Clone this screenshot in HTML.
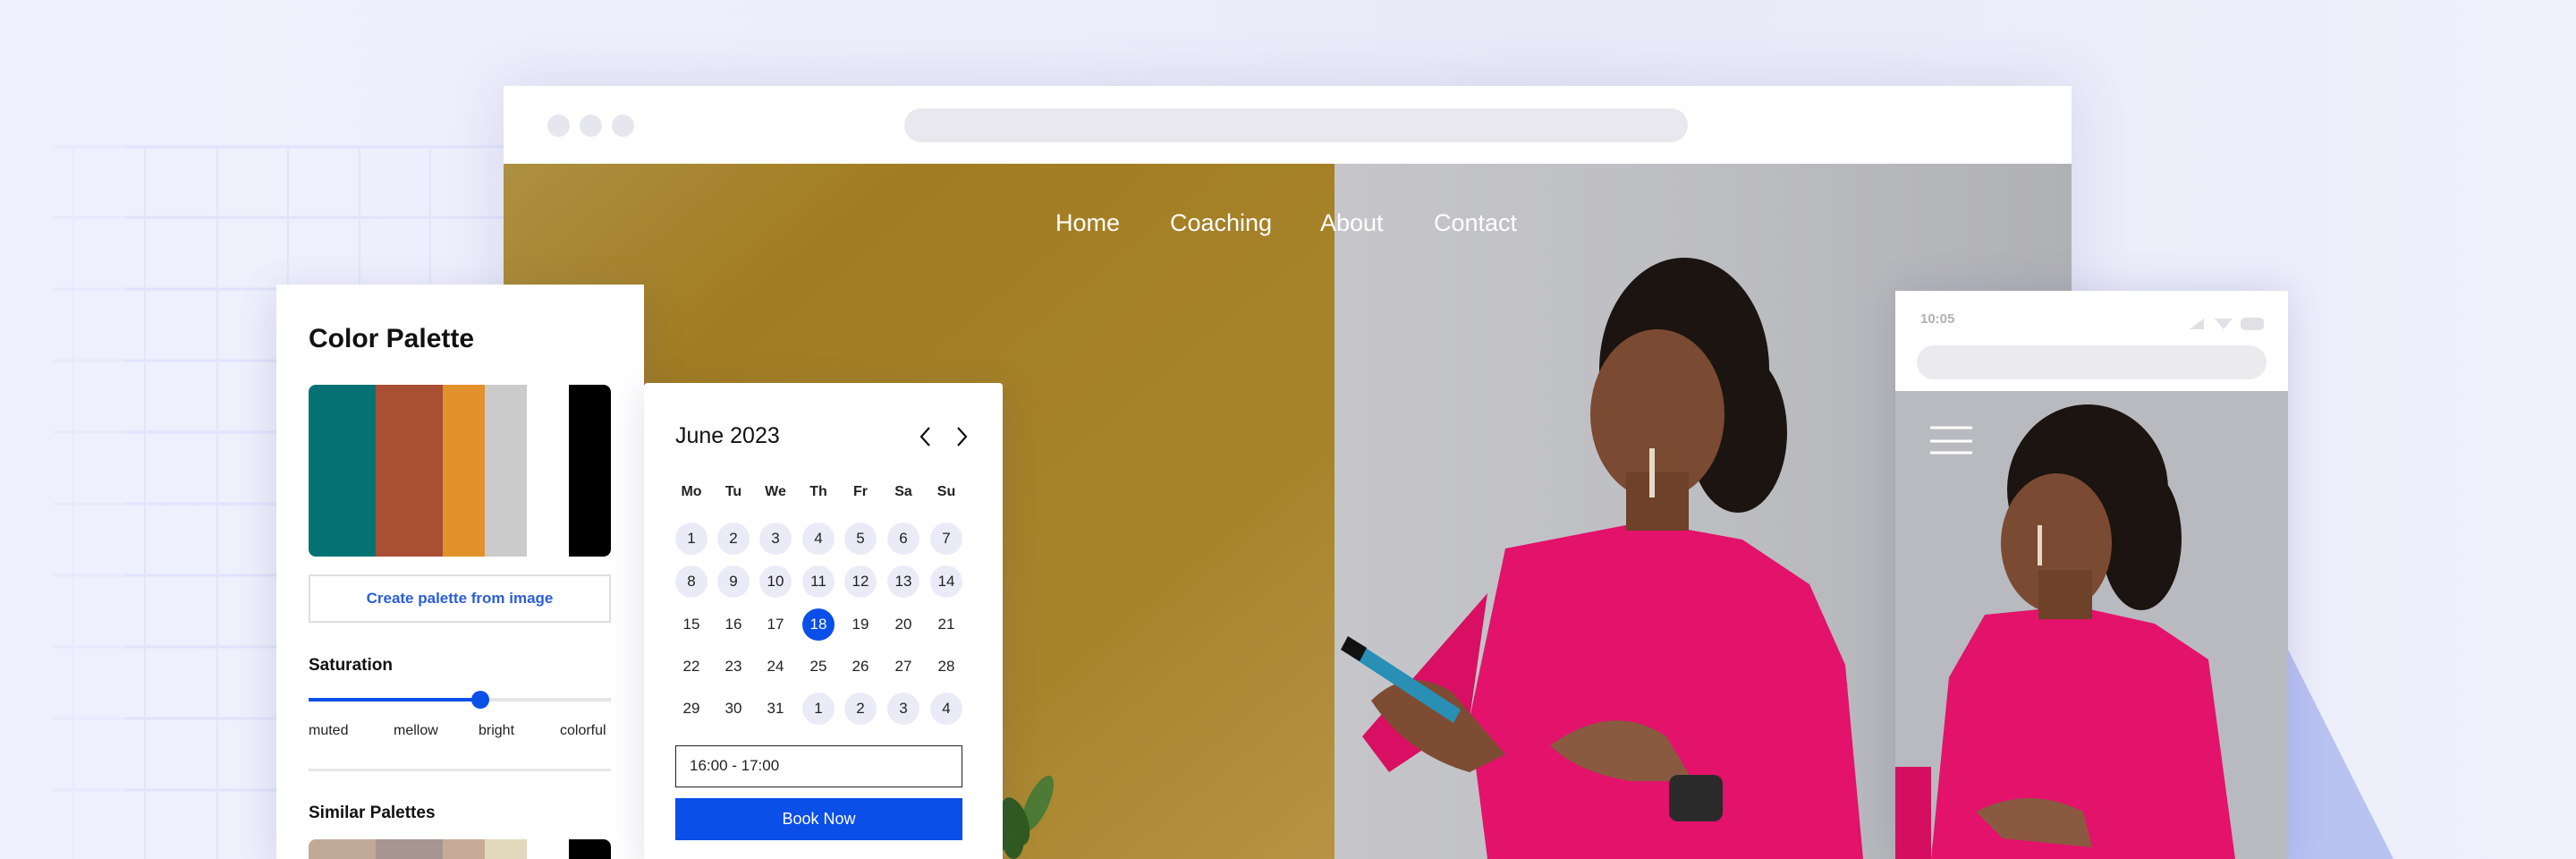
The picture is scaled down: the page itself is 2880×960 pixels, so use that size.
<!DOCTYPE html>
<html><head><meta charset="utf-8"><style>
*{margin:0;padding:0;box-sizing:border-box}
html,body{width:2880px;height:960px;overflow:hidden}
body{position:relative;font-family:"Liberation Sans",sans-serif;background:linear-gradient(90deg,#eef0fd 0%,#eceefb 40%,#e9eaf8 60%,#eef0fc 100%)}
.abs{position:absolute}
.card{position:absolute;background:#fff;box-shadow:0 10px 40px rgba(80,80,140,.18);overflow:hidden}
.dot{position:absolute;width:25px;height:25px;border-radius:50%;background:#e6e7ee;top:128px}
.nav{position:absolute;top:234px;color:#fff;font-size:27px}
.wd{position:absolute;top:541px;font-size:16px;font-weight:bold;color:#222;width:40px;text-align:center;margin-left:-20px}
.d{position:absolute;width:36px;height:36px;margin:-18px 0 0 -18px;border-radius:50%;font-size:17px;color:#222;text-align:center;line-height:36px}
.d.c{background:#ebebf8}
.d.s{background:#0a4fe8;color:#fff}
.lbl{position:absolute;font-size:16px;color:#222}
</style></head><body>
<svg class="abs" style="left:0;top:0" width="600" height="960">
<g stroke="#e0e3fb" stroke-width="3">
<line x1="60" y1="164" x2="570" y2="164"/><line x1="60" y1="243" x2="570" y2="243"/><line x1="60" y1="323" x2="570" y2="323"/><line x1="60" y1="403" x2="570" y2="403"/><line x1="60" y1="483" x2="570" y2="483"/><line x1="60" y1="563" x2="570" y2="563"/><line x1="60" y1="643" x2="570" y2="643"/><line x1="60" y1="723" x2="570" y2="723"/><line x1="60" y1="803" x2="570" y2="803"/><line x1="60" y1="883" x2="570" y2="883"/>
</g>
<g stroke="#e2e5fb" stroke-width="2">
<line x1="82" y1="164" x2="82" y2="960"/><line x1="162" y1="164" x2="162" y2="960"/><line x1="243" y1="164" x2="243" y2="960"/><line x1="322" y1="164" x2="322" y2="960"/><line x1="402" y1="164" x2="402" y2="960"/><line x1="481" y1="164" x2="481" y2="960"/>
</g>
<rect x="0" y="150" width="140" height="810" fill="#eef0fd" opacity=".5"/></svg>
<svg class="abs" style="left:0;top:0" width="2880" height="960"><polygon points="2540,690 2676,960 2540,960" fill="#b9c3f2"/></svg>

<div class="card" style="left:563px;top:96px;width:1753px;height:864px;box-shadow:0 0 60px rgba(80,80,150,.15)"></div>
<div class="dot" style="left:612px"></div><div class="dot" style="left:648px"></div><div class="dot" style="left:684px"></div>
<div class="abs" style="left:1011px;top:121px;width:876px;height:38px;border-radius:19px;background:#e8e8ee"></div>
<svg class="abs" style="left:563px;top:183px" width="1753" height="777">
<defs>
<linearGradient id="gold" x1="0" x2="1" y1="0" y2="1"><stop offset="0" stop-color="#ad9040"/><stop offset=".25" stop-color="#a27c22"/><stop offset=".7" stop-color="#a7842c"/><stop offset="1" stop-color="#b89343"/></linearGradient>
<linearGradient id="grey" x1="0" x2="1"><stop offset="0" stop-color="#c6c6ca"/><stop offset=".5" stop-color="#bdbec2"/><stop offset="1" stop-color="#b0b1b4"/></linearGradient>
</defs>
<rect x="0" y="0" width="929" height="777" fill="url(#gold)"/>
<rect x="929" y="0" width="824" height="777" fill="url(#grey)"/>
<g fill="#2f5a1e"><ellipse cx="597" cy="715" rx="12" ry="34" transform="rotate(25 597 715)" fill="#4d7a35"/><ellipse cx="572" cy="735" rx="14" ry="28" transform="rotate(-20 572 735)"/><ellipse cx="552" cy="750" rx="13" ry="24" transform="rotate(10 552 750)"/><ellipse cx="570" cy="755" rx="12" ry="22"/></g>
<g>
<path d="M1120 430 L1275 400 L1385 420 L1460 470 L1500 560 L1520 777 L1100 777 L1080 620 Z" fill="#e3126b"/>
<path d="M1100 480 L1030 560 L960 640 L990 680 L1080 620 Z" fill="#d80f63"/>
<ellipse cx="1320" cy="230" rx="95" ry="125" fill="#1c1410"/>
<ellipse cx="1380" cy="300" rx="55" ry="90" fill="#1c1410"/>
<ellipse cx="1290" cy="280" rx="75" ry="95" fill="#7a4a32"/>
<rect x="1255" y="345" width="70" height="65" fill="#6e4129"/>
<path d="M1170 650 Q1240 600 1300 640 L1330 690 L1260 690 Q1200 680 1170 650 Z" fill="#8a5a40"/>
<rect x="1303" y="683" width="60" height="52" rx="10" fill="#2a2a2a"/>
<path d="M970 600 Q1010 560 1060 590 L1120 660 L1080 680 Q1010 660 970 600 Z" fill="#7e4c33"/>
<path d="M944 528 L1070 610 L1062 625 L936 543 Z" fill="#2a8fb5"/>
<path d="M944 528 L965 541 L957 556 L936 543 Z" fill="#111"/>
<rect x="1281" y="318" width="6" height="55" fill="#e6d8c8"/>
</g>
</svg>
<div class="nav" style="left:1180px">Home</div>
<div class="nav" style="left:1308px">Coaching</div>
<div class="nav" style="left:1476px">About</div>
<div class="nav" style="left:1603px">Contact</div>

<div class="card" style="left:2119px;top:325px;width:439px;height:635px;box-shadow:0 0 40px rgba(80,80,150,.2)"></div>
<div class="abs" style="left:2147px;top:348px;font-size:15px;font-weight:bold;color:#b0b0b6">10:05</div>
<svg class="abs" style="left:2440px;top:350px" width="100" height="24"><polygon points="8,18 24,6 24,18" fill="#e0e0e6"/><polygon points="36,6 56,6 46,18" fill="#e0e0e6"/><rect x="65" y="5" width="26" height="14" rx="5" fill="#e0e0e6"/></svg>
<div class="abs" style="left:2143px;top:386px;width:391px;height:38px;border-radius:19px;background:#ebebef"></div>
<svg class="abs" style="left:2119px;top:437px" width="439" height="523">
<rect width="439" height="523" fill="#b9babf"/>
<path d="M100 250 L200 240 L290 260 L350 300 L380 523 L40 523 L60 320 Z" fill="#e3126b"/>
<rect x="0" y="420" width="40" height="103" fill="#d40f60"/>
<ellipse cx="215" cy="110" rx="90" ry="95" fill="#1c1410"/>
<ellipse cx="275" cy="165" rx="45" ry="80" fill="#1c1410"/>
<ellipse cx="180" cy="170" rx="62" ry="78" fill="#7a4a32"/>
<rect x="160" y="200" width="60" height="55" fill="#6e4129"/>
<path d="M90 470 Q150 440 210 470 L220 510 L120 500 Z" fill="#8a5a40"/>
<rect x="159" y="150" width="5" height="45" fill="#e6d8c8"/>
<g stroke="#fff" stroke-width="3"><line x1="39" y1="41" x2="86" y2="41"/><line x1="39" y1="56" x2="86" y2="56"/><line x1="39" y1="69" x2="86" y2="69"/></g>
</svg>

<div class="card" style="left:309px;top:318px;width:411px;height:642px">
<div class="abs" style="left:36px;top:44px;font-size:30px;font-weight:bold;color:#111">Color Palette</div>
<div class="abs" style="left:36px;top:112px;width:338px;height:192px;border-radius:8px;overflow:hidden;display:flex">
<div style="width:75px;background:#047274"></div><div style="width:75px;background:#a94f34"></div><div style="width:47px;background:#e2912d"></div><div style="width:47px;background:#cbcbcb"></div><div style="width:47px;background:#fff"></div><div style="width:47px;background:#000;border-radius:0 8px 8px 0"></div></div>
<div class="abs" style="left:36px;top:324px;width:338px;height:54px;border:2px solid #dedede;text-align:center;line-height:50px;font-size:17px;font-weight:bold;color:#2b5dd8">Create palette from image</div>
<div class="abs" style="left:36px;top:415px;font-size:19px;font-weight:bold;color:#111">Saturation</div>
<div class="abs" style="left:36px;top:462px;width:338px;height:4px;background:#e4e4e8"></div>
<div class="abs" style="left:36px;top:462px;width:192px;height:4px;background:#0a4fe8"></div>
<div class="abs" style="left:218px;top:454px;width:20px;height:20px;border-radius:50%;background:#0a4fe8"></div>
<div class="lbl" style="left:36px;top:490px">muted</div>
<div class="lbl" style="left:131px;top:490px">mellow</div>
<div class="lbl" style="left:226px;top:490px">bright</div>
<div class="lbl" style="left:317px;top:490px">colorful</div>
<div class="abs" style="left:36px;top:541px;width:338px;height:3px;background:#e6e6ea"></div>
<div class="abs" style="left:36px;top:580px;font-size:19px;font-weight:bold;color:#111">Similar Palettes</div>
<div class="abs" style="left:36px;top:620px;width:338px;height:22px;border-radius:8px 8px 0 0;overflow:hidden;display:flex">
<div style="width:75px;background:#c1a998"></div><div style="width:75px;background:#a69590"></div><div style="width:47px;background:#c5ab98"></div><div style="width:47px;background:#e2d9bd"></div><div style="width:47px;background:#fff"></div><div style="width:47px;background:#000;border-radius:0 8px 0 0"></div></div>
</div>

<div class="card" style="left:720px;top:428px;width:401px;height:532px;border-radius:4px 4px 0 0"></div>
<div class="abs" style="left:755px;top:473px;font-size:25px;color:#111">June 2023</div>
<svg class="abs" style="left:1025px;top:474px" width="60" height="28"><path d="M14 4 L5 14 L14 24 M46 4 L55 14 L46 24" fill="none" stroke="#111" stroke-width="2.2"/></svg>
<div class="wd" style="left:773px">Mo</div><div class="wd" style="left:820px">Tu</div><div class="wd" style="left:867px">We</div><div class="wd" style="left:915px">Th</div><div class="wd" style="left:962px">Fr</div><div class="wd" style="left:1010px">Sa</div><div class="wd" style="left:1058px">Su</div>
<div class="d c" style="left:773px;top:602px">1</div><div class="d c" style="left:820px;top:602px">2</div><div class="d c" style="left:867px;top:602px">3</div><div class="d c" style="left:915px;top:602px">4</div><div class="d c" style="left:962px;top:602px">5</div><div class="d c" style="left:1010px;top:602px">6</div><div class="d c" style="left:1058px;top:602px">7</div>
<div class="d c" style="left:773px;top:650px">8</div><div class="d c" style="left:820px;top:650px">9</div><div class="d c" style="left:867px;top:650px">10</div><div class="d c" style="left:915px;top:650px">11</div><div class="d c" style="left:962px;top:650px">12</div><div class="d c" style="left:1010px;top:650px">13</div><div class="d c" style="left:1058px;top:650px">14</div>
<div class="d" style="left:773px;top:698px">15</div><div class="d" style="left:820px;top:698px">16</div><div class="d" style="left:867px;top:698px">17</div><div class="d s" style="left:915px;top:698px">18</div><div class="d" style="left:962px;top:698px">19</div><div class="d" style="left:1010px;top:698px">20</div><div class="d" style="left:1058px;top:698px">21</div>
<div class="d" style="left:773px;top:745px">22</div><div class="d" style="left:820px;top:745px">23</div><div class="d" style="left:867px;top:745px">24</div><div class="d" style="left:915px;top:745px">25</div><div class="d" style="left:962px;top:745px">26</div><div class="d" style="left:1010px;top:745px">27</div><div class="d" style="left:1058px;top:745px">28</div>
<div class="d" style="left:773px;top:792px">29</div><div class="d" style="left:820px;top:792px">30</div><div class="d" style="left:867px;top:792px">31</div><div class="d c" style="left:915px;top:792px">1</div><div class="d c" style="left:962px;top:792px">2</div><div class="d c" style="left:1010px;top:792px">3</div><div class="d c" style="left:1058px;top:792px">4</div>
<div class="abs" style="left:755px;top:833px;width:321px;height:47px;border:1.5px solid #222;font-size:17px;color:#222;line-height:44px;padding-left:15px">16:00 - 17:00</div>
<div class="abs" style="left:755px;top:892px;width:321px;height:47px;background:#0a4fe8;color:#fff;font-size:18px;text-align:center;line-height:47px">Book Now</div>
</body></html>
